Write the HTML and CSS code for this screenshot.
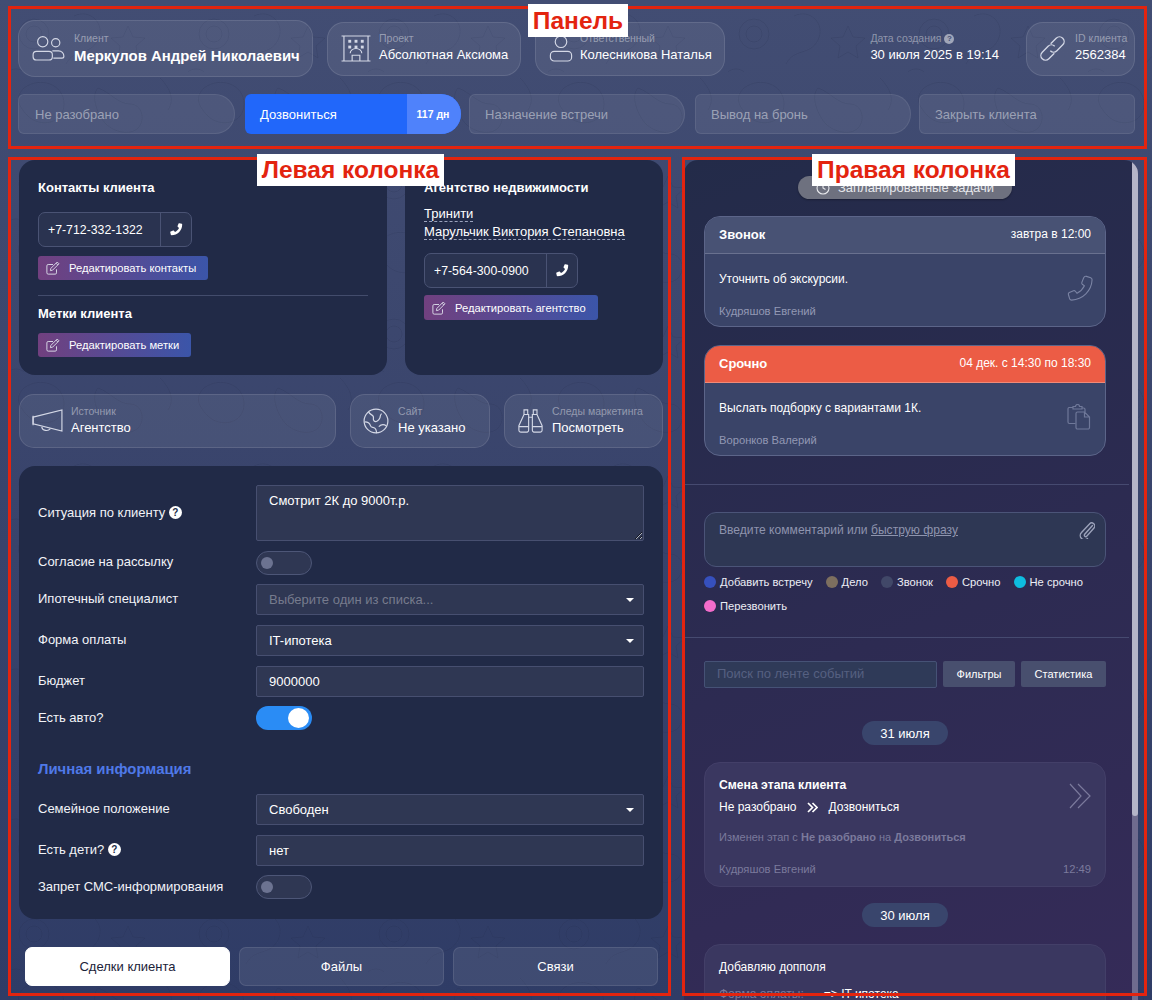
FILE: index.html
```html
<!DOCTYPE html>
<html lang="ru">
<head>
<meta charset="utf-8">
<title>Карточка клиента</title>
<link rel="stylesheet" href="styles.css">
</head>
<body>
<svg class="defs" width="0" height="0" aria-hidden="true">
  <symbol id="i-users" viewBox="0 0 34 26"><g fill="none" stroke="currentColor" stroke-width="1.2"><circle cx="11" cy="6" r="5.300"/><circle cx="24.500" cy="7" r="4.300"/><rect x="1" y="16" width="20" height="9" rx="3.500"/><path d="M21 15.500h6.500a5.500 5.500 0 0 1 5.500 5.500v0a2 2 0 0 1-2 2h-9"/></g></symbol>
  <symbol id="i-hotel" viewBox="0 0 30 28"><g fill="none" stroke="currentColor" stroke-width="1.2"><path d="M0 1h30M2.500 1v26M27.500 1v26M0 27h30"/><path d="M9 19a6 5 0 0 1 12 0M11 27v-6h8v6"/></g><g fill="currentColor"><rect x="7" y="5" width="3" height="3"/><rect x="13.500" y="5" width="3" height="3"/><rect x="20" y="5" width="3" height="3"/><rect x="7" y="11" width="3" height="3"/><rect x="13.500" y="11" width="3" height="3"/><rect x="20" y="11" width="3" height="3"/></g></symbol>
  <symbol id="i-user" viewBox="0 0 24 28"><g fill="none" stroke="currentColor" stroke-width="1.2"><circle cx="12" cy="7" r="6"/><rect x="1" y="17" width="22" height="10" rx="4"/></g></symbol>
  <symbol id="i-link" viewBox="0 0 28 28"><g fill="none" stroke="currentColor" stroke-width="1.300" transform="rotate(45 14 14)"><path d="M9.500 12V4.500a4.500 4.500 0 0 1 9 0V12.500a4.500 4.500 0 0 1-4.500 4.500"/><path d="M18.500 16v7.500a4.500 4.500 0 0 1-9 0V15.500a4.500 4.500 0 0 1 4.500-4.500"/></g></symbol>
  <symbol id="i-phone" viewBox="0 0 16 16"><path fill="currentColor" d="M14.500 1L11.500.3c-.4-.1-.7.1-.9.4L9.300 3.800c-.1.3-.1.6.2.9l1.600 1.400c-1 2.100-2.700 3.900-4.900 4.900L4.800 9.400c-.2-.3-.6-.3-.9-.2L.8 10.500c-.4.200-.5.500-.5.900l.7 3c.1.300.4.600.8.600C9.200 15 15 9.300 15 1.800c0-.4-.2-.7-.5-.8z"/></symbol>
  <symbol id="i-edit" viewBox="0 0 16 16"><g fill="none" stroke="currentColor" stroke-width="1.1"><path d="M12 9.500V13.500a1.500 1.500 0 0 1-1.500 1.500h-8A1.500 1.500 0 0 1 1 13.500v-8A1.500 1.500 0 0 1 2.500 4H8"/><path d="M5.500 8.500L12.800 1.200l2 2L7.500 10.500l-2.500.5zM11.500 2.500l2 2"/></g></symbol>
  <symbol id="i-horn" viewBox="0 0 32 26"><g fill="none" stroke="currentColor" stroke-width="1.200"><path d="M1 8.500L31 1v22L1 15.500z"/><path d="M1 7v10M10 18.500a5 4.500 0 0 0 9 2"/></g></symbol>
  <symbol id="i-globe" viewBox="0 0 28 28"><g fill="none" stroke="currentColor" stroke-width="1.300"><circle cx="14" cy="14" r="12.800"/><path d="M6 4c1 3 4 3 5 5s-1 3 1 5 5-1 6-3 0-3 2-5M2 15c3 0 5 1 6 4s3 1 5 3 1 4 2 5M17 20c2-2 5-3 8-1"/></g></symbol>
  <symbol id="i-binoc" viewBox="0 0 28 28"><g fill="none" stroke="currentColor" stroke-width="1.2"><path d="M7 2h4v5H7zM17 2h4v5h-4zM7 7l-5.500 12v5a2 2 0 0 0 2 2h7a2 2 0 0 0 1.500-2V7zM21 7l5.500 12v5a2 2 0 0 1-2 2h-7a2 2 0 0 1-1.500-2V7z"/><path d="M1.500 20H12M16 20h10.500M12 10h4"/></g></symbol>
  <symbol id="i-phone-o" viewBox="0 0 28 28"><path fill="none" stroke="currentColor" stroke-width="1.200" d="M21 1.500l4.500 1.500c1 .4 1.500 1.200 1.500 2.200C26.500 17 17 26.500 5 27c-1 0-1.800-.5-2.200-1.500L1.500 21c-.3-1 .2-1.800 1-2.200l4.500-1.800c.8-.3 1.500-.1 2 .5l1.800 2.200c3.500-1.700 6.300-4.500 8-8L16.500 10c-.6-.5-.8-1.200-.5-2L18 3c.4-1 1.800-1.800 3-1.500z"/></symbol>
  <symbol id="i-clip" viewBox="0 0 24 26"><g fill="none" stroke="currentColor" stroke-width="1.200"><path d="M6 3V2.500h2.500a2 2 0 0 1 4 0H15V5H6zM6 3.500H2a1.500 1.500 0 0 0-1 1.500v13a1.500 1.500 0 0 0 1.500 1.500h6M15 4h1.500a1.500 1.500 0 0 1 1.500 1.500V8"/><path d="M9 9.500a1.500 1.500 0 0 1 1.500-1.500h7l5 5v10.500a1.500 1.500 0 0 1-1.500 1.500h-10.500a1.500 1.500 0 0 1-1.500-1.500zM17.500 8v5h5"/></g></symbol>
  <symbol id="i-paper" viewBox="0 0 16 17"><path fill="none" stroke="currentColor" stroke-width="1.400" stroke-linecap="round" d="M13.500 3.500L5.500 12.500a1.500 1.500 0 0 0 2 2L15 6a3 3 0 0 0-4.500-4L2.500 10.500a4.200 4.200 0 0 0 6 6"/></symbol>
  <symbol id="i-chev" viewBox="0 0 22 26"><g fill="none" stroke="currentColor" stroke-width="1.200"><path d="M1 1l11 12L1 25M9 1l12 12L9 25"/></g></symbol>
  <symbol id="i-chev2" viewBox="0 0 11 11"><path fill="none" stroke="currentColor" stroke-width="1.700" d="M1 1l4.500 4.500L1 10M5.500 1L10 5.500 5.500 10"/></symbol>
  <symbol id="i-clock" viewBox="0 0 14 14"><g fill="none" stroke="currentColor" stroke-width="1.100"><circle cx="7" cy="7" r="6"/><path d="M7 3.500V7l2.500 1.500"/></g></symbol>
</svg>

<div class="page">
  <header class="panel">
    <div class="info-row">
      <div class="tile tile-client">
        <svg class="ic ic-users"><use href="#i-users"/></svg>
        <div class="tile-text"><div class="cap">Клиент</div><div class="val val-big">Меркулов Андрей Николаевич</div></div>
      </div>
      <div class="tile tile-project">
        <svg class="ic ic-hotel"><use href="#i-hotel"/></svg>
        <div class="tile-text"><div class="cap">Проект</div><div class="val">Абсолютная Аксиома</div></div>
      </div>
      <div class="tile tile-owner">
        <svg class="ic ic-user"><use href="#i-user"/></svg>
        <div class="tile-text"><div class="cap">Ответственный</div><div class="val">Колесникова Наталья</div></div>
      </div>
      <div class="created tile-text">
        <div class="cap">Дата создания <span class="help help-dim">?</span></div>
        <div class="val">30 июля 2025 в 19:14</div>
      </div>
      <div class="tile tile-id">
        <svg class="ic ic-link"><use href="#i-link"/></svg>
        <div class="tile-text"><div class="cap">ID клиента</div><div class="val">2562384</div></div>
      </div>
    </div>
    <div class="stages">
      <div class="stage">Не разобрано</div>
      <div class="stage stage-on"><span class="stage-name">Дозвониться</span><span class="stage-days">117 дн</span></div>
      <div class="stage">Назначение встречи</div>
      <div class="stage">Вывод на бронь</div>
      <div class="stage stage-last">Закрыть клиента</div>
    </div>
  </header>

  <div class="columns">
    <main class="left">
      <div class="top-cards">
        <section class="card card-contacts">
          <h3 class="title">Контакты клиента</h3>
          <div class="phone"><span class="phone-num">+7-712-332-1322</span><span class="phone-btn"><svg class="ic-ph"><use href="#i-phone"/></svg></span></div>
          <button class="edit"><svg class="ic-edit"><use href="#i-edit"/></svg>Редактировать контакты</button>
          <hr class="rule">
          <h3 class="title">Метки клиента</h3>
          <button class="edit edit-tags"><svg class="ic-edit"><use href="#i-edit"/></svg>Редактировать метки</button>
        </section>
        <section class="card card-agency">
          <h3 class="title">Агентство недвижимости</h3>
          <div class="agency-lines"><span class="dashed">Тринити</span><br><span class="dashed">Марульчик Виктория Степановна</span></div>
          <div class="phone"><span class="phone-num">+7-564-300-0900</span><span class="phone-btn"><svg class="ic-ph"><use href="#i-phone"/></svg></span></div>
          <button class="edit edit-agency"><svg class="ic-edit"><use href="#i-edit"/></svg>Редактировать агентство</button>
        </section>
      </div>

      <div class="sources">
        <div class="tile tile-source">
          <svg class="ic ic-horn"><use href="#i-horn"/></svg>
          <div class="tile-text"><div class="cap">Источник</div><div class="val">Агентство</div></div>
        </div>
        <div class="tile tile-site">
          <svg class="ic ic-globe"><use href="#i-globe"/></svg>
          <div class="tile-text"><div class="cap">Сайт</div><div class="val">Не указано</div></div>
        </div>
        <div class="tile tile-trace">
          <svg class="ic ic-binoc"><use href="#i-binoc"/></svg>
          <div class="tile-text"><div class="cap">Следы маркетинга</div><div class="val">Посмотреть</div></div>
        </div>
      </div>

      <section class="card form">
        <label class="lbl">Ситуация по клиенту <span class="help">?</span></label>
        <textarea class="ctl area">Смотрит 2К до 9000т.р.</textarea>
        <label class="lbl">Согласие на рассылку</label>
        <span class="toggle"></span>
        <label class="lbl">Ипотечный специалист</label>
        <div class="ctl sel sel-ph">Выберите один из списка...</div>
        <label class="lbl">Форма оплаты</label>
        <div class="ctl sel">IT-ипотека</div>
        <label class="lbl">Бюджет</label>
        <input class="ctl" value="9000000">
        <label class="lbl">Есть авто?</label>
        <span class="toggle toggle-on"></span>
        <h3 class="form-head">Личная информация</h3>
        <label class="lbl">Семейное положение</label>
        <div class="ctl sel">Свободен</div>
        <label class="lbl">Есть дети? <span class="help">?</span></label>
        <input class="ctl" value="нет">
        <label class="lbl">Запрет СМС-информирования</label>
        <span class="toggle"></span>
      </section>

      <nav class="tabs">
        <button class="tab tab-on">Сделки клиента</button>
        <button class="tab">Файлы</button>
        <button class="tab">Связи</button>
      </nav>
    </main>

    <aside class="right">
      <div class="feed">
        <div class="sect sect-tasks">
          <div class="center"><span class="sched"><svg class="ic-clock"><use href="#i-clock"/></svg>Запланированные задачи</span></div>
          <article class="task">
            <div class="task-head"><b>Звонок</b><span>завтра в 12:00</span></div>
            <div class="task-body"><p class="task-text">Уточнить об экскурсии.</p><p class="who">Кудряшов Евгений</p><svg class="task-ic ti-phone"><use href="#i-phone-o"/></svg></div>
          </article>
          <article class="task">
            <div class="task-head task-head-red"><b>Срочно</b><span>04 дек. с 14:30 по 18:30</span></div>
            <div class="task-body"><p class="task-text">Выслать подборку с вариантами 1К.</p><p class="who">Воронков Валерий</p><svg class="task-ic ti-clip"><use href="#i-clip"/></svg></div>
          </article>
        </div>
        <div class="sect sect-comment">
          <div class="comment"><span>Введите комментарий или <u>быструю фразу</u></span><svg class="ic-paper"><use href="#i-paper"/></svg></div>
          <div class="legend">
            <span class="lg"><i class="dot d-blue"></i>Добавить встречу</span>
            <span class="lg"><i class="dot d-brown"></i>Дело</span>
            <span class="lg"><i class="dot d-slate"></i>Звонок</span>
            <span class="lg"><i class="dot d-red"></i>Срочно</span>
            <span class="lg"><i class="dot d-cyan"></i>Не срочно</span>
            <span class="lg"><i class="dot d-pink"></i>Перезвонить</span>
          </div>
        </div>
        <div class="sect-events">
          <div class="search-row">
            <input class="search" placeholder="Поиск по ленте событий">
            <button class="sbtn">Фильтры</button>
            <button class="sbtn">Статистика</button>
          </div>
          <div class="center date-first"><span class="date">31 июля</span></div>
          <article class="event">
            <svg class="ev-ic"><use href="#i-chev"/></svg>
            <div class="ev-title">Смена этапа клиента</div>
            <div class="ev-move">Не разобрано<svg class="ic-chev2"><use href="#i-chev2"/></svg>Дозвониться</div>
            <div class="ev-note">Изменен этап с <b>Не разобрано</b> на <b>Дозвониться</b></div>
            <div class="ev-foot"><span>Кудряшов Евгений</span><span>12:49</span></div>
          </article>
          <div class="center date-next"><span class="date">30 июля</span></div>
          <article class="event">
            <div class="ev-plain">Добавляю допполя</div>
            <div class="ev-change"><span class="ev-key">Форма оплаты:</span><span>=&gt; IT ипотека</span></div>
          </article>
        </div>
      </div>
      <div class="scroll"><div class="thumb"></div></div>
    </aside>
  </div>
</div>

<div class="note note-panel"><span class="note-tag tag-panel">Панель</span></div>
<div class="note note-left"><span class="note-tag tag-left">Левая колонка</span></div>
<div class="note note-right"><span class="note-tag tag-right">Правая колонка</span></div>
</body>
</html>
```

FILE: styles.css
```css
* { box-sizing: border-box; }
html, body { margin: 0; height: 1000px; overflow: hidden; }
body {
  position: relative;
  width: 1152px;
  font-family: "Liberation Sans", Arial, sans-serif;
  font-size: 13px;
  color: #fff;
  background-color: #3a4569;
  background-image:
    url("data:image/svg+xml,%3Csvg xmlns='http://www.w3.org/2000/svg' width='180' height='150'%3E%3Cg fill='none' stroke='%23171f3f' stroke-opacity='.13' stroke-width='1'%3E%3Ccircle cx='34' cy='34' r='15'/%3E%3Ccircle cx='34' cy='34' r='8'/%3E%3Cpath d='M74 16c16-8 32 8 24 24s-24 8-32 24M128 26l5 11 12 1-9 8 2 12-10-6-10 6 2-12-9-8 12-1zM24 88c16-12 40-4 40 16s-24 24-36 12-12-20-4-28zM98 88c12 4 20 16 32 16s16 16 8 24-24 4-32-4-16-28-8-36zM160 78c8 8 16 20 8 32M8 72c4-4 12-4 16 0'/%3E%3C/g%3E%3C/svg%3E"),
    linear-gradient(180deg, #424d73 0%, #38436b 55%, #2f3c66 100%);
}
.defs { position: absolute; }
.page { display: flex; flex-direction: column; height: 1000px; }

/* Panel */
.panel { padding: 20px 17px 0 18px; height: 160px; }
.info-row { display: flex; align-items: center; gap: 14px; height: 57px; }
.tile {
  display: flex; align-items: center; gap: 12px;
  height: 54px; padding: 0 12px 0 13px;
  border: 1px solid rgba(255,255,255,.11);
  border-radius: 17px;
  background: rgba(255,255,255,.07);
}
.tile-client { width: 295px; height: 57px; padding-left: 13px; gap: 9px; }
.tile-project { width: 194px; gap: 8px; }
.tile-owner { width: 190px; gap: 7px; padding-left: 13px; }
.tile-id { width: 109px; margin-left: 13px; gap: 7px; padding-left: 11px; }
.created { margin-left: auto; }
.tile-text { position: relative; top: -1px; }
.tile-id .tile-text { left: 1px; }
.ic { flex: none; color: #d4d8e6; display: block; }
.ic-users { width: 33px; height: 25px; }
.ic-hotel { width: 30px; height: 27px; }
.ic-user { width: 24px; height: 27px; }
.ic-link { width: 29px; height: 29px; }
.cap { font-size: 10.500px; line-height: 14px; color: rgba(255,255,255,.42); white-space: nowrap; }
.val { font-size: 13px; line-height: 18px; margin-top: 1px; white-space: nowrap; color: #fff; }
.val-big { font-size: 14.900px; font-weight: 700; margin-top: 2px; }
.help {
  display: inline-flex; align-items: center; justify-content: center;
  width: 13px; height: 13px; border-radius: 50%;
  background: #fff; color: #222b48;
  font-size: 10px; font-weight: 700; line-height: 1; vertical-align: 1px;
}
.help-dim { width: 10px; height: 10px; font-size: 8px; background: rgba(255,255,255,.5); color: #414c72; }

.stages { display: grid; grid-template-columns: 217px repeat(4, 216px); gap: 9px; margin-top: 17px; }
.stage {
  display: flex; align-items: center;
  height: 40px; padding-left: 15px;
  border: 1px solid rgba(255,255,255,.08);
  border-radius: 6px 20px 20px 6px;
  background: rgba(255,255,255,.07);
  color: rgba(255,255,255,.45);
}
.stage:first-child { padding-left: 16px; }
.stage:nth-child(even) { margin: 0 -1px 0 1px; }
.stage-last { border-radius: 6px; }
.stage-on {
  padding-left: 0; border: 0; overflow: hidden;
  background: #2167fa; color: #fff; justify-content: space-between;
}
.stage-name { padding-left: 15px; }
.stage-days {
  display: flex; align-items: center; justify-content: center;
  width: 54px; height: 100%; padding-right: 2px;
  background: #4f82fb; font-size: 10.500px; font-weight: 700;
}

/* Columns */
.columns { flex: 1; display: flex; min-height: 0; }
.left { width: 684px; padding-left: 19px; padding-right: 21px; }
.top-cards { display: flex; gap: 18px; }
.card { background: #212a47; border-radius: 16px; }
.card-contacts { width: 368px; height: 215px; padding: 20px 19px 0; }
.card-agency { width: 258px; height: 215px; padding: 20px 19px 0; }
.title { margin: 0; font-size: 13px; line-height: 16px; font-weight: 700; }
.phone {
  display: flex; width: 154px; height: 35px; margin-top: 16px;
  border: 1px solid #4a5374; border-radius: 7px; background: #2a3350;
}
.phone-num { flex: 1; display: flex; align-items: center; padding-left: 9px; font-size: 12.300px; border-right: 1px solid #4a5374; }
.phone-btn { width: 30px; display: flex; align-items: center; justify-content: center; }
.ic-ph { width: 13px; height: 13px; color: #fff; }
.edit {
  display: flex; align-items: center; gap: 9px;
  height: 24px; margin-top: 9px; padding: 0 12px 0 8px;
  border: 0; border-radius: 3px;
  font: inherit; font-size: 11.200px; color: #fff;
  background: linear-gradient(90deg, #71407f 0%, #3b55a9 100%);
}
.ic-edit { width: 14px; height: 14px; color: #d8d8e6; flex: none; }
.rule { margin: 15px 0 10px; border: 0; border-top: 1px solid #434c6c; }
.edit-tags { margin-top: 11px; }
.agency-lines { margin-top: 9px; line-height: 18px; }
.dashed { border-bottom: 1px dashed #9ba3bd; }
.card-agency .phone { margin-top: 12px; }
.edit-agency { margin-top: 7px; height: 25px; }

.sources { display: flex; gap: 14px; margin-top: 19px; }
.sources .tile { height: 54px; border-radius: 15px; padding-left: 12px; gap: 9px; }
.sources .tile-source { width: 317px; gap: 8px; }
.sources .tile-site { width: 140px; }
.sources .tile-trace { width: 159px; padding-right: 0; gap: 8px; }
.ic-horn { width: 31px; height: 25px; }
.ic-globe { width: 26px; height: 26px; }
.ic-binoc { width: 27px; height: 26px; }

.form {
  display: grid; grid-template-columns: 218px 388px; align-items: center;
  row-gap: 9.700px;
  height: 453px; margin-top: 18px; padding: 19px 19px 0;
  align-content: start;
}
.lbl { position: relative; top: -1px; font-size: 13px; color: #f2f3f8; }
.ctl {
  display: block; width: 100%; height: 31px; padding: 0 12px; margin: 0;
  border: 1px solid #474f70; border-radius: 2px;
  background: #2f3753; color: #fff;
  font: inherit; font-size: 13px; line-height: 29px; outline: 0;
}
.area { height: 56px; padding: 6px 12px 2px; line-height: 18px; resize: vertical; }
.sel { position: relative; }
.sel::after {
  content: ""; position: absolute; right: 9px; top: 13px;
  border: 4px solid transparent; border-top-color: #fff; border-bottom: 0;
}
.sel-ph { color: rgba(255,255,255,.35); }
.toggle {
  position: relative; display: block; width: 56px; height: 24px;
  border: 1px solid #4d5677; border-radius: 12px; background: #2f3753;
}
.toggle::after {
  content: ""; position: absolute; left: 4px; top: 5px;
  width: 12px; height: 12px; border-radius: 50%; background: #6c7391;
}
.toggle-on { border: 0; background: #2a8cf5; }
.toggle-on::after { left: 32px; top: 2px; width: 21px; height: 20px; background: #fff; border-radius: 50%; }
.form-head {
  grid-column: 1 / -1; margin: 20px 0 6px;
  font-size: 14.900px; line-height: 18px; font-weight: 700; color: #4f79e8;
}

.tabs { display: flex; gap: 9px; margin-top: 28px; padding: 0 5px 0 6px; }
.tab {
  flex: 1; height: 39px; border: 1px solid rgba(255,255,255,.1); border-radius: 7px;
  background: rgba(255,255,255,.08); color: #fff; font: inherit; font-size: 13px;
}
.tab-on { background: #fff; color: #1b2238; border-color: #fff; }

/* Right */
.right {
  display: flex; width: 454px; height: 840px; overflow: hidden;
  border-radius: 14px 14px 0 0;
  background: linear-gradient(160deg, #232b49 0%, #2d2b52 55%, #352b58 100%);
}
.feed { flex: 1; min-width: 0; overflow: hidden; padding-top: 16px; }
.scroll { width: 6px; background: #6f6b8e; }
.thumb { height: 656px; background: #b5b5c8; border-radius: 3px; }
.center { display: flex; justify-content: center; width: 442px; }
.sect { margin-right: 3px; border-bottom: 1px solid #464a70; }
.sect-tasks { height: 309px; padding: 0 22px 0 20px; }
.sect-tasks .center { width: 402px; }
.sched {
  display: flex; align-items: center; justify-content: center; gap: 8px;
  width: 214px; height: 23px; border-radius: 12px;
  background: #6e717f; font-size: 13px; color: #e7e8ec;
  box-shadow: 0 1px 2px rgba(0,0,0,.3);
}
.ic-clock { width: 14px; height: 14px; color: #e7e8ec; }
.task {
  position: relative; width: 402px; height: 111px; margin-top: 17px;
  border: 1px solid #5c6589; border-radius: 16px; overflow: hidden;
  background: #3a4468;
}
.task + .task { margin-top: 18px; }
.task-head {
  display: flex; align-items: center; justify-content: space-between;
  height: 37px; padding: 0 14px 2px; font-size: 12px;
  background: #485274; border-bottom: 1px solid #69718f;
}
.task-head b { font-size: 13px; }
.task-head-red { background: #ec5c45; border-bottom-color: #f08a78; }
.task-body { position: relative; padding: 17px 14px 0; height: 73px; }
.task-text { margin: 0; font-size: 12px; line-height: 16px; }
.who { margin: 16.500px 0 0; font-size: 11.200px; line-height: 14px; color: #9298b4; }
.task-ic { position: absolute; right: 12px; top: 21px; width: 26px; height: 26px; color: #7b84a4; }
.ti-clip { width: 24px; height: 26px; right: 14px; top: 21px; color: #6f7899; }

.sect-comment { height: 153px; padding: 27px 22px 0 20px; }
.comment {
  position: relative; width: 402px; height: 55px; padding: 9px 14px;
  border: 1px solid #4b5478; border-radius: 12px;
  background: #2e3754; color: #8e94ae; font-size: 12.100px; line-height: 16px;
}
.ic-paper { position: absolute; right: 10px; top: 9px; width: 16px; height: 17px; color: #9ca2ba; }
.legend { display: flex; flex-wrap: wrap; width: 402px; column-gap: 13px; row-gap: 8px; margin-top: 7px; }
.lg { display: inline-flex; align-items: center; gap: 4px; height: 16px; font-size: 11.200px; color: #eceef5; }
.dot { width: 12px; height: 12px; border-radius: 50%; }
.d-blue { background: #3650bd; }
.d-brown { background: #7d6f5f; }
.d-slate { background: #414868; }
.d-red { background: #ec5c45; }
.d-cyan { background: #0ebde0; }
.d-pink { background: #f36ccb; }

.sect-events { padding: 23px 25px 0 20px; }
.search-row { display: flex; gap: 6px; width: 402px; }
.search {
  width: 233px; height: 27px; padding: 0 12px 2px; border: 1px solid #465276; border-radius: 2px;
  background: #2f3a58; color: #fff; font: inherit; font-size: 13px; outline: 0;
}
.search::placeholder { color: #566081; }
.sbtn {
  height: 26px; padding: 0 0 1px; border: 0; border-radius: 2px;
  background: #484f6e; color: #fff; font: inherit; font-size: 11px;
}
.sbtn:nth-of-type(1) { width: 72px; }
.sbtn:nth-of-type(2) { width: 85px; }
.sect-events .center { width: 402px; }
.date-first { margin-top: 33px; }
.date-next { margin-top: 16px; }
.date {
  display: flex; align-items: center; justify-content: center;
  width: 86px; height: 24px; border-radius: 12px; background: #39456c; font-size: 13px;
}
.event {
  position: relative; width: 402px; height: 125px; margin-top: 17px; padding: 14px 14px 0;
  border: 1px solid #433f68; border-radius: 16px; background: #3a3760;
}
.ev-ic { position: absolute; right: 14px; top: 20px; width: 22px; height: 26px; color: #7b7a9c; }
.ev-title { font-size: 12.200px; line-height: 16px; font-weight: 700; }
.ev-move { display: flex; align-items: center; margin-top: 6px; font-size: 12px; line-height: 16px; }
.ic-chev2 { width: 11px; height: 11px; margin: 0 10px 0 11px; color: #fff; }
.ev-note { margin-top: 15px; font-size: 11px; line-height: 14px; color: #7b7a9c; }
.ev-foot { display: flex; justify-content: space-between; margin-top: 18px; font-size: 11.200px; line-height: 14px; color: #7b7a9c; }
.ev-plain { font-size: 12px; line-height: 16px; }
.ev-change { display: flex; gap: 20px; margin-top: 11px; font-size: 12px; line-height: 16px; }
.ev-key { color: #7b7a9c; }

/* Annotation layer over the screenshot */
.note { position: absolute; border: 3px solid #e3240f; pointer-events: none; }
.note-panel { left: 8px; top: 6px; width: 1139px; height: 143px; }
.note-left { left: 8px; top: 157px; width: 663px; height: 839px; }
.note-right { left: 682px; top: 157px; width: 465px; height: 839px; }
.note-tag {
  position: absolute; display: flex; align-items: center; justify-content: center;
  height: 32px; background: #fff; color: #e3240f;
  font-family: "Liberation Sans", Arial, sans-serif; font-size: 24.500px; font-weight: 700; white-space: nowrap;
}
.tag-panel { left: 517px; top: -5px; width: 100px; height: 33px; }
.tag-left { left: 246px; top: -6px; width: 187px; }
.tag-right { left: 127px; top: -6px; width: 203px; }
```
